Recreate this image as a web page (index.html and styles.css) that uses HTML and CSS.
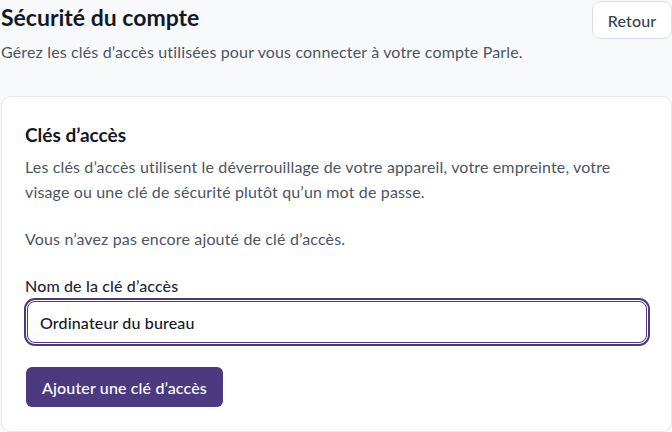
FILE: index.html
```html
<!DOCTYPE html>
<html lang="fr">
<head>
<meta charset="utf-8">
<title>Sécurité du compte</title>
<link rel="stylesheet" href="styles.css">
</head>
<body>
<div class="page">
  <header class="header">
    <div class="header-text">
      <h1 class="title">Sécurité du compte</h1>
      <p class="subtitle">Gérez les clés d’accès utilisées pour vous connecter à votre compte Parle.</p>
    </div>
    <button class="btn-back" type="button">Retour</button>
  </header>
  <section class="card">
    <h2 class="card-title">Clés d’accès</h2>
    <p class="card-text">Les clés d’accès utilisent le déverrouillage de votre appareil, votre empreinte, votre visage ou une clé de sécurité plutôt qu’un mot de passe.</p>
    <p class="card-text empty">Vous n’avez pas encore ajouté de clé d’accès.</p>
    <label class="field-label" for="keyname">Nom de la clé d’accès</label>
    <input class="field-input" id="keyname" type="text" value="Ordinateur du bureau">
    <button class="btn-primary" type="button">Ajouter une clé d’accès</button>
  </section>
</div>
</body>
</html>
```

FILE: styles.css
```css
* { box-sizing: border-box; }
html, body {
  margin: 0;
  padding: 0;
  background: #f8f9fb;
  font-family: "Lato", "Noto Sans", sans-serif;
  color: #111827;
}
.page {
  display: flex;
  flex-direction: column;
  gap: 32px;
  padding: 1px 0 0 1px;
}
.header {
  display: flex;
  justify-content: space-between;
  align-items: flex-start;
}
.title {
  margin: 0;
  font-size: 23px;
  font-weight: 700;
  line-height: 32px;
  color: #111827;
}
.subtitle {
  margin: 7px 0 0;
  font-size: 16px;
  line-height: 24px;
  letter-spacing: 0.15px;
  color: #4b5563;
}
.btn-back {
  width: 80px;
  height: 38px;
  background: #ffffff;
  border: 1px solid #d9dde3;
  border-radius: 8px;
  font-family: inherit;
  font-size: 16px;
  font-weight: 500;
  letter-spacing: 0.15px;
  color: #374151;
  padding: 0;
}
.card {
  background: #ffffff;
  border: 1px solid #e5e7eb;
  border-radius: 10px;
  padding: 24px 23px 24px 23px;
  display: flex;
  flex-direction: column;
  align-items: flex-start;
}
.card-title {
  margin: 0;
  font-size: 19px;
  font-weight: 700;
  line-height: 27px;
  color: #111827;
}
.card-text {
  margin: 6px 0 0;
  font-size: 16px;
  line-height: 25px;
  letter-spacing: 0.15px;
  color: #4b5563;
}
.card-text.empty {
  margin-top: 22px;
}
.field-label {
  margin-top: 24px;
  font-size: 16px;
  line-height: 22px;
  font-weight: 500;
  letter-spacing: 0.15px;
  color: #1f2937;
}
.field-input {
  margin-top: 4px;
  align-self: stretch;
  height: 42px;
  border: 1px solid #4c3a80;
  border-radius: 8px;
  outline: 2px solid #4c3a80;
  outline-offset: 1px;
  padding: 0 12px;
  font-family: inherit;
  font-size: 16px;
  font-weight: 500;
  letter-spacing: 0.15px;
  color: #111827;
  background: #ffffff;
  margin-left: 2px;
  margin-right: 1px;
}
.btn-primary {
  margin-top: 24px;
  margin-left: 1px;
  height: 40px;
  padding: 0 16px;
  background: #4c3a80;
  color: #ffffff;
  border: none;
  border-radius: 6px;
  font-family: inherit;
  font-size: 16px;
  font-weight: 500;
  letter-spacing: 0.15px;
}
```
